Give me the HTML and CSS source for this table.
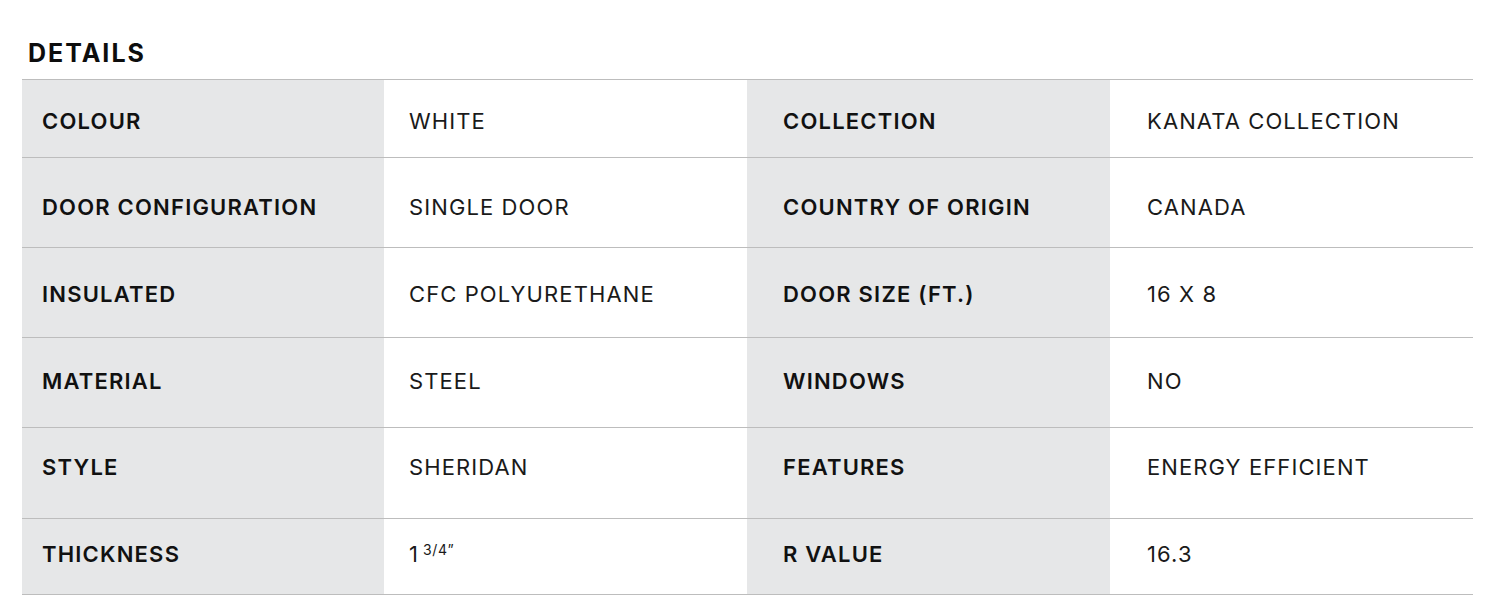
FILE: index.html
```html
<!DOCTYPE html>
<html>
<head>
<meta charset="utf-8">
<link rel="stylesheet" href="styles.css">
</head>
<body>
<section class="details">
  <h2 class="title">DETAILS</h2>
  <div class="table">
    <div class="row r1">
      <div class="cell label c1">COLOUR</div>
      <div class="cell value c2">WHITE</div>
      <div class="cell label c3">COLLECTION</div>
      <div class="cell value c4">KANATA COLLECTION</div>
    </div>
    <div class="row r2">
      <div class="cell label c1">DOOR CONFIGURATION</div>
      <div class="cell value c2">SINGLE DOOR</div>
      <div class="cell label c3">COUNTRY OF ORIGIN</div>
      <div class="cell value c4">CANADA</div>
    </div>
    <div class="row r3">
      <div class="cell label c1">INSULATED</div>
      <div class="cell value c2">CFC POLYURETHANE</div>
      <div class="cell label c3">DOOR SIZE (FT.)</div>
      <div class="cell value c4">16 X 8</div>
    </div>
    <div class="row r4">
      <div class="cell label c1">MATERIAL</div>
      <div class="cell value c2">STEEL</div>
      <div class="cell label c3">WINDOWS</div>
      <div class="cell value c4">NO</div>
    </div>
    <div class="row r5">
      <div class="cell label c1">STYLE</div>
      <div class="cell value c2">SHERIDAN</div>
      <div class="cell label c3">FEATURES</div>
      <div class="cell value c4">ENERGY EFFICIENT</div>
    </div>
    <div class="row r6">
      <div class="cell label c1">THICKNESS</div>
      <div class="cell value c2">1<sup class="frac">3/4”</sup></div>
      <div class="cell label c3">R VALUE</div>
      <div class="cell value c4">16.3</div>
    </div>
  </div>
</section>
</body>
</html>
```

FILE: styles.css
```css
* { box-sizing: border-box; }
html, body { margin: 0; padding: 0; background: #fff; }
body {
  font-family: Inter, "Open Sans", "Liberation Sans", sans-serif;
  color: #111;
}
.details {
  padding: 0 27px 0 22px;
}
.title {
  margin: 0;
  padding: 38px 0 0 6px;
  height: 79px;
  font-size: 25px;
  font-weight: 700;
  line-height: 30px;
  letter-spacing: 2px;
  color: #0d0d0d;
}
.table {
  border-top: 1px solid #bdbdbd;
}
.row {
  display: grid;
  grid-template-columns: 362px 363px 363px 363px;
  height: 90px;
  border-bottom: 1px solid #bdbdbd;
}
.row.r1 { height: 78px; }
.row.r5 { height: 91px; }
.row.r6 { height: 76px; }
.cell {
  display: flex;
  align-items: flex-start;
  font-size: 22px;
  line-height: 24px;
  white-space: nowrap;
}
.r1 .cell { padding-top: 29px; }
.r2 .cell { padding-top: 37px; }
.r3 .cell { padding-top: 34px; }
.r4 .cell { padding-top: 31px; }
.r5 .cell { padding-top: 27px; }
.r6 .cell { padding-top: 23px; }
.label {
  background: #e6e7e8;
  font-weight: 600;
  letter-spacing: 1.2px;
  color: #111;
}
.value {
  font-weight: 400;
  letter-spacing: 1.1px;
  color: #1a1a1a;
}
.c1 { padding-left: 20px; }
.c2 { padding-left: 25px; }
.c3 { padding-left: 36px; }
.c4 { padding-left: 37px; }
.frac {
  font-size: 14px;
  line-height: 14px;
  margin-left: 4px;
  position: relative;
  top: 1px;
  letter-spacing: 0.6px;
}
```
